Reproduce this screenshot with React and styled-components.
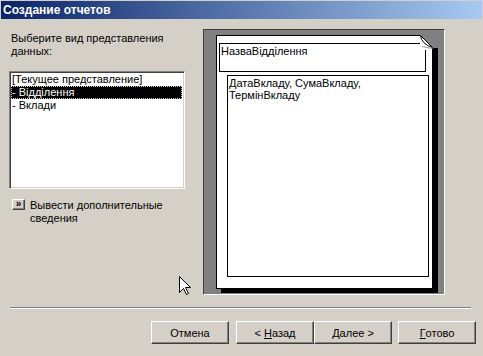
import React from "react";
import styled, {createGlobalStyle} from "styled-components";

const GlobalStyle = createGlobalStyle`
    html, body {
        margin: 0;
        padding: 0;
        background: #d4d0c8;
    }
    body {
        font-family: "Liberation Sans", Arial, sans-serif;
        font-size: 11px;
        color: #000;
    }
    * { box-sizing: border-box; }
`;

const items = ["[Текущее представление]", "- Відділення", "- Вклади"];

function Cursor() {
    return (
        <CursorStyled width="13" height="20" viewBox="0 0 13 20">
            <path d="M0.5 0.5 L0.5 16.5 L4.5 12.5 L7.5 18.5 L9.5 17.5 L6.5 11.5 L11.5 11.5 Z"
                  fill="#fff" stroke="#000" strokeWidth="1" />
        </CursorStyled>
    )
}

function Fold() {
    return (
        <FoldStyled width="18" height="15" viewBox="0 0 18 15">
            <rect x="0" y="0" width="18" height="15" fill="#808080" />
            <polygon points="0,0 13,13 13,15 0,15" fill="#fff" />
            <rect x="13" y="13" width="5" height="2" fill="#000" />
            <rect x="12" y="13" width="1" height="2" fill="#000" />
            <path d="M2 11.5 L12.5 13.5" stroke="#a0a0a0" strokeWidth="1.2" />
            <path d="M0.5 0.5 Q1.5 9 12.5 12.5 L0.5 0.5" fill="#fff" stroke="#000" strokeWidth="1" />
        </FoldStyled>
    )
}

function App() {
    return (
        <>
            <GlobalStyle />
            <Window>
                <TitleBar>Создание отчетов</TitleBar>
                <Content>
                    <LeftCol>
                        <Label>Выберите вид представления данных:</Label>
                        <ListBox>
                            {items.map((item, i) => (
                                <ListItem key={item} $selected={i === 1}>{item}</ListItem>
                            ))}
                        </ListBox>
                        <MoreRow>
                            <SmallButton>»</SmallButton>
                            <MoreText>Вывести дополнительные сведения</MoreText>
                        </MoreRow>
                    </LeftCol>
                    <Preview>
                        <Page>
                            <Fold />
                            <HeaderBox>НазваВідділення</HeaderBox>
                            <DetailBox>ДатаВкладу, СумаВкладу, ТермінВкладу</DetailBox>
                        </Page>
                    </Preview>
                </Content>
                <Separator />
                <ButtonRow>
                    <Button>Отмена</Button>
                    <Button $gap={7}>&lt; <u>Н</u>азад</Button>
                    <Button $gap={0}><u>Д</u>алее &gt;</Button>
                    <Button $gap={6}><u>Г</u>отово</Button>
                </ButtonRow>
                <Cursor />
            </Window>
        </>
    )
}

const Window = styled.div`
    position: relative;
    width: 483px;
    height: 356px;
    background: #d4d0c8;
    padding-top: 1px;
    overflow: hidden;
`;

const TitleBar = styled.div`
    height: 18px;
    margin: 0 1px;
    padding-left: 2px;
    display: flex;
    align-items: center;
    background: linear-gradient(to right, #0a246a, #a6caf0);
    color: #fff;
    font-weight: bold;
    font-size: 12px;
`;

const Content = styled.div`
    display: flex;
    height: 276px;
    padding: 10px 0 0 9px;
`;

const LeftCol = styled.div`
    width: 176px;
    padding-top: 3px;
    display: flex;
    flex-direction: column;
`;

const Label = styled.div`
    padding-left: 2px;
    width: 170px;
    line-height: 13px;
`;

const ListBox = styled.div`
    margin-top: 13px;
    width: 176px;
    height: 118px;
    background: #fff;
    border: 1px solid;
    border-color: #808080 #fff #fff #808080;
    box-shadow: inset 1px 1px 0 #404040, inset -1px -1px 0 #d4d0c8;
    padding: 1px 2px 1px 1px;
`;

const ListItem = styled.div`
    height: 13px;
    line-height: 13px;
    padding-left: 1px;
    white-space: nowrap;
    background: ${p => p.$selected ? "#000" : "transparent"};
    color: ${p => p.$selected ? "#fff" : "#000"};
    outline: ${p => p.$selected ? "1px dotted #d4d0c8" : "none"};
    outline-offset: -1px;
`;

const MoreRow = styled.div`
    display: flex;
    align-items: flex-start;
    gap: 5px;
    margin: 10px 0 0 3px;
`;

const SmallButton = styled.div`
    width: 13px;
    height: 11px;
    flex: none;
    background: #d4d0c8;
    border: 1px solid;
    border-color: #fff #404040 #404040 #fff;
    box-shadow: inset -1px -1px 0 #808080;
    font-size: 10px;
    font-weight: bold;
    line-height: 8px;
    text-align: center;
`;

const MoreText = styled.div`
    line-height: 13px;
    width: 140px;
`;

const Preview = styled.div`
    margin-left: 18px;
    width: 242px;
    height: 266px;
    background: #808080;
    border: 1px solid;
    border-color: #404040 #fff #fff #404040;
    padding: 5px 0 0 12px;
`;

const Page = styled.div`
    position: relative;
    width: 217px;
    height: 254px;
    background: #fff;
    border: 1px solid #000;
    box-shadow: 5px 4px 0 #000;
    display: flex;
    flex-direction: column;
    align-items: flex-start;
`;

const FoldStyled = styled.svg`
    position: absolute;
    top: -1px;
    right: -6px;
    display: block;
`;

const HeaderBox = styled.div`
    margin: 7px 0 0 2px;
    width: 207px;
    height: 29px;
    border: 1px solid #000;
    padding: 1px;
    line-height: 12px;
`;

const DetailBox = styled.div`
    margin: 3px 0 0 10px;
    width: 202px;
    height: 202px;
    border: 1px solid #000;
    padding: 1px;
    line-height: 12px;
    width: 202px;
`;

const Separator = styled.div`
    margin: 12px 12px 0 10px;
    border-top: 1px solid #808080;
    border-bottom: 1px solid #fff;
`;

const ButtonRow = styled.div`
    display: flex;
    margin-top: 12px;
    padding-left: 151px;
`;

const Button = styled.div`
    width: 78px;
    height: 23px;
    margin-left: ${p => p.$gap || 0}px;
    display: flex;
    align-items: center;
    justify-content: center;
    background: #d4d0c8;
    border: 1px solid;
    border-color: #fff #404040 #404040 #fff;
    box-shadow: inset -1px -1px 0 #808080, inset 1px 1px 0 #d4d0c8;
    white-space: pre;
    u { text-decoration: underline; }
`;

const CursorStyled = styled.svg`
    position: absolute;
    left: 179px;
    top: 276px;
    display: block;
`;

export default App;
